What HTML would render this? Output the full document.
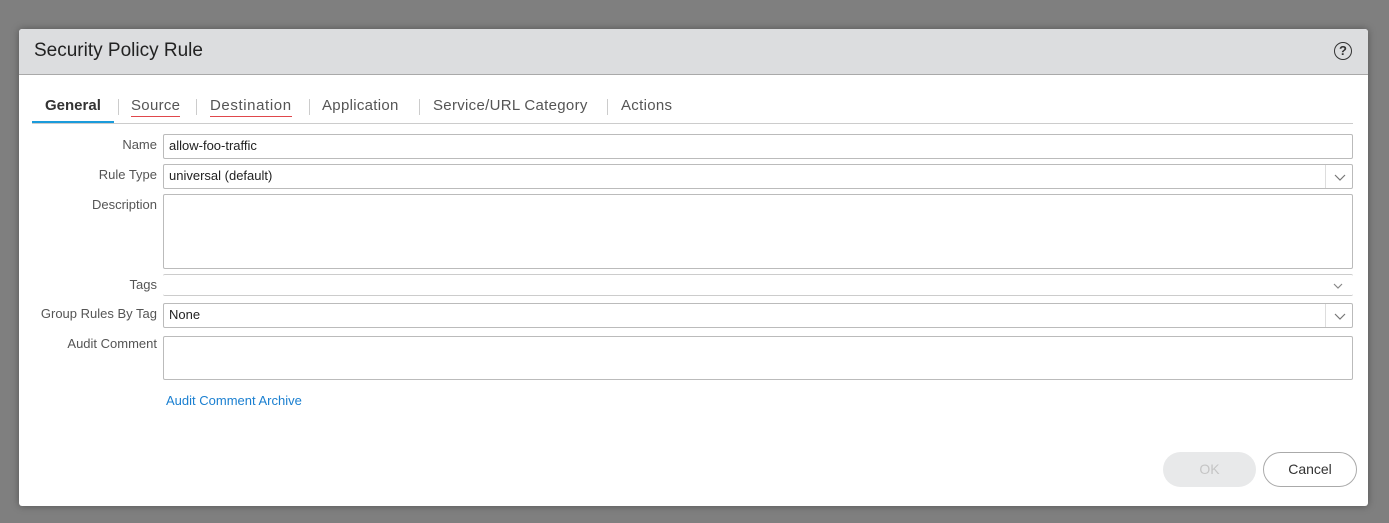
<!DOCTYPE html>
<html><head><style>
body{margin:0;width:1389px;height:523px;background:#7f7f7f;font-family:"Liberation Sans",sans-serif;position:relative;overflow:hidden}
.dlg{position:absolute;left:19px;top:29px;width:1349px;height:477px;background:#fff;border-radius:3px;box-shadow:0 0 8px rgba(0,0,0,.35);overflow:hidden}
.hd{position:absolute;left:0;top:0;right:0;height:45px;background:#dcdddf;border-bottom:1px solid #a9a9a9}
.hd span{position:absolute;left:15px;top:11px;font-size:19px;color:#222}
.help{position:absolute;right:16px;top:13px;width:16px;height:16px;border:1.7px solid #333;border-radius:50%;font-size:13px;font-weight:bold;text-align:center;line-height:16px;color:#333}
.tabs{position:absolute;left:13px;top:68px;right:15px;height:26px;border-bottom:1px solid #ccc;font-size:15px;color:#555}
.t{position:absolute;top:0;letter-spacing:0.3px}
.sep{position:absolute;top:2px;width:1px;height:16px;background:#ccc}
.lab{position:absolute;right:1211px;font-size:13px;color:#555;text-align:right;white-space:nowrap}
.f{position:absolute;left:144px;width:1190px;border:1px solid #bbb;border-radius:2px;font-size:13px;color:#222;box-sizing:border-box;padding:3px 5px}
.chev{position:absolute;right:0;top:0;width:26px;height:100%;border-left:1px solid #ddd}
.chev svg{position:absolute;left:8px;top:9px}
</style></head><body>
<div class="dlg">
<div class="hd"><span>Security Policy Rule</span><div class="help">?</div></div>
<div class="tabs">
<div class="t" style="left:13px;font-weight:bold;color:#333;letter-spacing:0">General</div>
<div style="position:absolute;left:0;top:24px;width:82px;height:2px;background:#1a9bdb"></div>
<div class="sep" style="left:86px"></div>
<div class="t" style="left:99px;border-bottom:1.5px solid #e0474c;padding-bottom:2px">Source</div>
<div class="sep" style="left:164px"></div>
<div class="t" style="left:178px;border-bottom:1.5px solid #e0474c;padding-bottom:2px;letter-spacing:0.6px">Destination</div>
<div class="sep" style="left:277px"></div>
<div class="t" style="left:290px">Application</div>
<div class="sep" style="left:387px"></div>
<div class="t" style="left:401px">Service/URL Category</div>
<div class="sep" style="left:575px"></div>
<div class="t" style="left:589px">Actions</div>
</div>
<div class="lab" style="top:108px">Name</div>
<div class="f" style="top:105px;height:25px">allow-foo-traffic</div>
<div class="lab" style="top:138px">Rule Type</div>
<div class="f" style="top:135px;height:25px">universal (default)<div class="chev"><svg width="12" height="7"><path d="M1 1l5 5 5-5" fill="none" stroke="#777" stroke-width="1.2"/></svg></div></div>
<div class="lab" style="top:168px">Description</div>
<div class="f" style="top:165px;height:75px"></div>
<div class="lab" style="top:248px">Tags</div>
<div class="f" style="top:245px;height:22px;border-left:none;border-right:none;border-color:#ccc"><svg style="position:absolute;right:10px;top:8px" width="10" height="6"><path d="M1 1l4 4 4-4" fill="none" stroke="#888" stroke-width="1.2"/></svg></div>
<div class="lab" style="top:277px">Group Rules By Tag</div>
<div class="f" style="top:274px;height:25px">None<div class="chev"><svg width="12" height="7"><path d="M1 1l5 5 5-5" fill="none" stroke="#777" stroke-width="1.2"/></svg></div></div>
<div class="lab" style="top:307px">Audit Comment</div>
<div class="f" style="top:307px;height:44px"></div>
<div style="position:absolute;left:147px;top:364px;font-size:13px;color:#1a7fd0">Audit Comment Archive</div>
<div style="position:absolute;left:1144px;top:423px;width:93px;height:35px;border-radius:18px;background:#e8e9ea;color:#c5c5c5;font-size:14px;text-align:center;line-height:35px">OK</div>
<div style="position:absolute;left:1244px;top:423px;width:92px;height:33px;border-radius:18px;border:1px solid #aaa;color:#333;font-size:14px;text-align:center;line-height:33px">Cancel</div>
</div>
</body></html>
